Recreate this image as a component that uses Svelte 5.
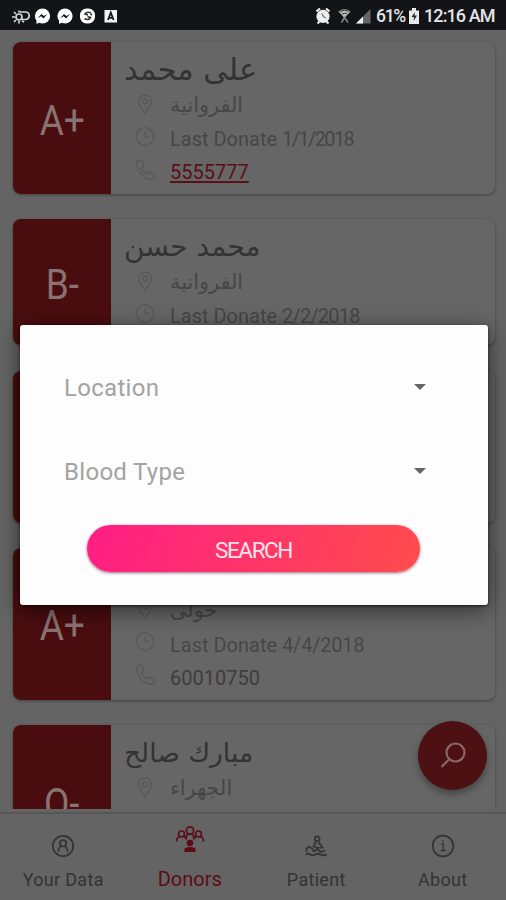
<script>
  let donors = [
    { type: "A+", name: "على محمد", nameSize: 30.5, city: "الفروانية", date: "1/1/2018", spacing: -1.6, phone: "5555777", link: true },
    { type: "B-", name: "محمد حسن", nameSize: 28, city: "الفروانية", date: "2/2/2018", spacing: -0.8 },
    { type: "", tall: true },
    { type: "A+", city: "حولى", date: "4/4/2018", spacing: -0.2, phone: "60010750" },
    { type: "O-", name: "مبارك صالح", nameSize: 26.5, city: "الجهراء", tall: true },
  ];

  let fields = ["Location", "Blood Type"];

  let tabs = [
    { id: "data", label: "Your Data" },
    { id: "donors", label: "Donors" },
    { id: "patient", label: "Patient" },
    { id: "about", label: "About" },
  ];

  let active = "donors";
</script>

<div class="phone">
  <header>
    <svg class="notices" width="108" height="18" viewBox="0 0 108 18">
      <g fill="none" stroke="#d8d8d8" stroke-width="1.7">
        <circle cx="8" cy="10" r="3" />
        <path d="M8 3.5v2M8 14v2.5M1 10h3M3 5l2 2M3 15l2-2M11 14l2 1" />
        <path d="M9 5h5.500a3.500 3.500 0 0 1 0 7.500H11" />
      </g>
      {#each [31.5, 54] as x}
        <circle cx={x} cy="9" r="7.6" fill="#fff" />
        <path d="M{x - 6} 13v4l4-2z" fill="#fff" />
        <path d="M{x - 5} 11.3l4-4.4 2.4 2.2 3.6-2-4 4.4-2.4-2.2z" fill="#15171b" />
      {/each}
      <rect x="69" y="1.5" width="15" height="15" rx="6.5" fill="#fff" />
      <path d="M80 6q-4-2-6 1l3 1M73.500 11.500q4 2.500 6-1l-3-1M79.500 8l1.500-1" fill="none" stroke="#333" stroke-width="1.6" />
      <rect x="93.5" y="3" width="12.5" height="12.5" fill="#f4f4f4" />
      <path d="M97 13l2.800-7.500 2.800 7.500M98 10.800h3.600" fill="none" stroke="#17191d" stroke-width="1.8" />
    </svg>
    <div class="state">
      <svg width="56" height="18" viewBox="0 0 56 18">
        <circle cx="8" cy="9.3" r="6.6" fill="#eee" />
        <path d="M1.500 4.500l3.500-3M14.500 4.500l-3.500-3M2.500 16.500l2-2M13.500 16.500l-2-2" stroke="#eee" stroke-width="2.2" />
        <path d="M7 6.500l1.300 3 2.500 1.300" fill="none" stroke="#777" stroke-width="1.3" />
        <path d="M23.500 4.500q6-4.500 12 0L29.500 11z" fill="#bbb" />
        <path d="M25 4.500q4.500-2.800 9 0M27 7q2.500-1.500 5 0" fill="none" stroke="#333" />
        <path d="M26.500 15.500l3-5 3.500 5" fill="none" stroke="#888" stroke-width="1.5" />
        <path d="M41 16.500L55.500 2v14.500z" fill="#666" />
        <path d="M41 16.500l7-7v7z" fill="#f2f2f2" />
      </svg>
      <span class="percent">61%</span>
      <svg width="10" height="16" viewBox="0 0 10 16">
        <path d="M0 2.500h3V0h4v2.500h3V16H0z" fill="#e8e8e8" />
        <path d="M6 4L2.500 9H5l-.5 4L8 7.500H5.500z" fill="#26282c" />
      </svg>
      <span class="clock">12:16 AM</span>
    </div>
  </header>

  <main>
    {#each donors as donor}
      <article class:tall={donor.tall}>
        <div class="type"><span>{donor.type}</span></div>
        <div class="info">
          <h2 dir="rtl" style="font-size: {donor.nameSize || 28}px">{donor.name || ""}</h2>
          {#if donor.city}
            <div class="row">
              <svg width="22" height="24" viewBox="0 0 22 24">
                <path d="M11 20.500C8 15.500 4.500 12 4.500 8.500a6.500 6.500 0 0 1 13 0c0 3.500-3.500 7-6.500 12z" />
                <circle cx="11" cy="8.500" r="2.300" />
              </svg>
              <span class="city" dir="rtl">{donor.city}</span>
            </div>
          {/if}
          {#if donor.date}
            <div class="row">
              <svg width="22" height="24" viewBox="0 0 22 24">
                <circle cx="11" cy="10.500" r="8.800" />
                <path d="M11 5.500v5h4" />
              </svg>
              <span class="text">Last Donate <b style="letter-spacing: {donor.spacing}px">{donor.date}</b></span>
            </div>
          {/if}
          {#if donor.phone}
            <div class="row">
              <svg width="22" height="24" viewBox="0 0 22 24">
                <path d="M3 2l4-1 3 6-3 2.500 5 5.500 3-2.500 5.500 3.500-1 4C10 22 1 10 3 2z" />
              </svg>
              <span class="text tel" class:link={donor.link}>{donor.phone}</span>
            </div>
          {/if}
        </div>
      </article>
    {/each}
  </main>

  <nav>
    {#each tabs as tab}
      <div class="tab {tab.id}" class:active={active === tab.id}>
        {#if tab.id === "data"}
          <svg width="32" height="32" viewBox="0 0 32 32">
            <circle cx="16" cy="16" r="10.200" />
            <circle cx="16" cy="13.300" r="3.200" />
            <path d="M11.500 21.800c0-3.500 1.500-5 3-5.500M20.500 21.800c0-3.500-1.500-5-3-5.500" />
          </svg>
        {:else if tab.id === "donors"}
          <svg width="32" height="32" viewBox="0 0 32 32">
            <circle cx="16" cy="6.500" r="3.600" />
            <circle cx="7.500" cy="10" r="3" />
            <circle cx="24.500" cy="10" r="3" />
            <path d="M2.500 17.500c0-3 1.500-4.500 3.500-5M10 12.500l2 2c0-2.500 1.200-4 2.500-4.500M29.500 17.500c0-3-1.500-4.500-3.500-5M22 12.500l-2 2c0-2.500-1.200-4-2.500-4.500" />
            <circle class="solid" cx="16" cy="19" r="3.200" />
            <path class="solid" d="M10.300 28v-2c0-2 1.700-2.500 4-3h3.400c2.300.5 4 1 4 3v2z" />
          </svg>
        {:else if tab.id === "patient"}
          <svg width="32" height="32" viewBox="0 0 32 32">
            <circle cx="17.200" cy="8.700" r="2.400" />
            <path d="M16 11.500l-2.500 5 4.500 1.500 4.500-.5-4-5.500M6.500 22v-3.500l2.500-2 3 2 2 3 3-2.500 4 3 4-1.500" />
            <path d="M5.500 24.500q2.500-1.500 5 0t5 0 5 0 6 0" stroke-width="2" />
          </svg>
        {:else}
          <svg width="32" height="32" viewBox="0 0 32 32">
            <circle cx="16" cy="16" r="10.300" />
            <path d="M14 14.200h2.200v6M13.700 20.500h5M16 10.300v2" stroke-width="1.3" />
          </svg>
        {/if}
        <span>{tab.label}</span>
      </div>
    {/each}
  </nav>

  <div class="fab">
    <svg width="32" height="32" viewBox="0 0 32 32">
      <circle cx="18.500" cy="12.500" r="9" />
      <path d="M12.500 19l-8 8" />
    </svg>
  </div>

  <div class="dialog">
    {#each fields as field}
      <div class="field">
        <span>{field}</span>
        <i></i>
      </div>
    {/each}
    <button>SEARCH</button>
  </div>
</div>

<style>
  :global(body) {
    margin: 0;
    background: #656565;
  }

  .phone {
    position: relative;
    width: 506px;
    height: 900px;
    overflow: hidden;
    display: flex;
    flex-direction: column;
    background: #646464;
    font-family: Roboto, "DejaVu Sans", sans-serif;
  }

  header {
    flex: none;
    height: 30px;
    box-sizing: border-box;
    padding: 1px 12px 0 11px;
    display: flex;
    align-items: center;
    justify-content: space-between;
    background: #121418;
    color: #e4e4e4;
    font-size: 18px;
  }

  .state {
    display: flex;
    align-items: center;
  }

  .percent {
    margin: 0 3px 0 5px;
    width: 30px;
    font-size: 17.5px;
    letter-spacing: -1.3px;
    font-weight: 500;
  }

  .clock {
    margin-left: 5px;
    width: 70px;
    letter-spacing: -0.9px;
    white-space: nowrap;
    font-weight: 500;
  }

  main {
    height: 779px;
    box-sizing: border-box;
    padding: 12px 11px 0 13px;
    display: flex;
    flex-direction: column;
    gap: 25.25px;
    overflow: hidden;
  }

  article {
    flex: none;
    min-height: 126px;
    display: flex;
    border-radius: 8px;
    background: #666;
    box-shadow: 0 1px 3px #404040;
    overflow: hidden;
  }

  .tall {
    min-height: 152px;
  }

  .type {
    width: 98px;
    flex: none;
    display: grid;
    place-items: center;
    padding-top: 3px;
    box-sizing: border-box;
    background: #4a0d0f;
    color: #897272;
    font-size: 43px;
    font-weight: 400;
  }

  .type span {
    transform: scaleX(0.86);
  }

  .info {
    padding: 0 0 7px 13px;
  }

  h2 {
    margin: 0;
    height: 46px;
    padding-top: 9px;
    box-sizing: border-box;
    font-family: "DejaVu Sans", sans-serif;
    line-height: 38px;
    font-weight: 400;
    color: #333;
    width: fit-content;
    white-space: nowrap;
  }

  .row {
    height: 33px;
    display: flex;
    align-items: center;
    padding-left: 10px;
    color: #464646;
    font-size: 20px;
  }

  .row svg {
    margin-right: 14px;
    fill: none;
    stroke: #585858;
    stroke-width: 1.3;
  }

  .city {
    font-family: "DejaVu Sans", sans-serif;
    font-size: 20.8px;
    line-height: 30px;
  }

  .text {
    padding-top: 3px;
  }

  .text b {
    font-weight: 400;
  }

  .tel {
    color: #3d3d3d;
  }

  .link {
    color: #5a1018;
    text-decoration: underline;
    text-decoration-thickness: 1.5px;
    text-underline-offset: 2px;
  }

  nav {
    flex: none;
    height: 88px;
    margin-top: auto;
    box-sizing: border-box;
    padding-top: 16px;
    border-top: 2px solid #575757;
    display: grid;
    grid-template-columns: repeat(4, 1fr);
    background: #646464;
  }

  .tab {
    display: flex;
    flex-direction: column;
    align-items: center;
    gap: 6px;
    height: 62px;
    color: #333;
    font-size: 18px;
    line-height: 24px;
    letter-spacing: 0.3px;
  }

  .tab svg {
    flex: none;
    fill: none;
    stroke: currentColor;
    stroke-width: 1.7;
  }

  .tab .solid {
    fill: currentColor;
    stroke: none;
  }

  .active {
    margin-top: -6px;
    gap: 11px;
    color: #5c0c18;
    font-size: 20px;
    letter-spacing: 0;
  }

  .fab {
    position: absolute;
    left: 418px;
    top: 721px;
    width: 69px;
    height: 69px;
    border-radius: 50%;
    display: grid;
    place-items: center;
    background: #4d1114;
    box-shadow: 0 4px 7px #444;
  }

  .fab svg {
    fill: none;
    stroke: #8a6666;
    stroke-width: 2.2;
  }

  .dialog {
    position: absolute;
    left: 20px;
    top: 325px;
    width: 468px;
    height: 280px;
    box-sizing: border-box;
    padding: 21px 44px 0;
    border-radius: 3px;
    background: #fdfdfd;
    box-shadow: 0 5px 22px rgba(0, 0, 0, 0.55), 0 1px 3px rgba(0, 0, 0, 0.6);
  }

  .field {
    height: 84px;
    display: flex;
    align-items: center;
    justify-content: space-between;
    padding-right: 18px;
    color: #a3a3a3;
    font-size: 24px;
    letter-spacing: 0.3px;
  }

  .field i {
    margin-bottom: 2px;
    border: 6px solid transparent;
    border-top-color: #666;
    border-bottom: 0;
  }

  button {
    display: block;
    width: 333px;
    height: 47px;
    margin: 11px 0 0 23px;
    padding: 2px 0 0;
    border: 0;
    border-radius: 24px;
    background: linear-gradient(110deg, #ff2082 5%, #ff4a4f 95%);
    box-shadow: 0 1px 3px rgba(90, 0, 40, 0.6);
    color: #ffe3ea;
    font-family: Roboto, sans-serif;
    font-size: 22.5px;
    letter-spacing: -1.4px;
  }
</style>
